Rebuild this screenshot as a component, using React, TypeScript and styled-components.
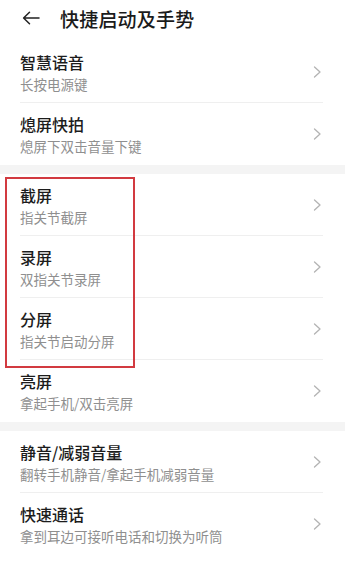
import React from "react";
import styled, { createGlobalStyle } from "styled-components";

const Global = createGlobalStyle`
  html, body { margin: 0; padding: 0; background: #ffffff; }
  body { font-family: "Noto Sans CJK SC", "Noto Sans", sans-serif; -webkit-font-smoothing: antialiased; }
`;

const Page = styled.div`
  width: 345px;
  min-height: 587px;
  background: #ffffff;
  display: flex;
  flex-direction: column;
`;

const Header = styled.div`
  height: 41px;
  display: flex;
  align-items: center;
  padding-left: 22px;
  box-sizing: border-box;
  padding-bottom: 9px;
`;

const BackBtn = styled.div`
  width: 18px;
  height: 14px;
  display: flex;
  align-items: center;
  margin-right: 20px;
  margin-top: 4px;
`;

const Title = styled.div`
  font-size: 19px;
  font-weight: 500;
  color: #1b1b1b;
  line-height: 24px;
  margin-top: 5px;
  letter-spacing: 0.2px;
`;

const Group = styled.div`
  position: relative;
  display: flex;
  flex-direction: column;
`;

const Band = styled.div`
  height: 9px;
  background: #f4f4f4;
`;

const Row = styled.div`
  height: 62px;
  box-sizing: border-box;
  display: flex;
  align-items: stretch;
  padding-left: 20px;
  padding-right: 22px;
`;

const RowInner = styled.div<{ $divider: boolean }>`
  flex: 1;
  display: flex;
  align-items: center;
  justify-content: space-between;
  border-bottom: ${(p) => (p.$divider ? "1px solid #efefef" : "1px solid transparent")};
`;

const Texts = styled.div`
  display: flex;
  flex-direction: column;
  padding-top: 1px;
`;

const ItemTitle = styled.div`
  font-size: 16px;
  line-height: 20px;
  font-weight: 500;
  color: #1c1c1c;
`;

const ItemSub = styled.div`
  font-size: 13.5px;
  line-height: 18px;
  color: #8f8f8f;
  margin-top: 3px;
`;

const Chevron = styled.svg`
  width: 9px;
  height: 12px;
  flex: none;
  margin-right: 1px;
`;

const Highlight = styled.div`
  position: absolute;
  left: 5px;
  top: 3px;
  width: 130px;
  height: 191px;
  border: 2.5px solid #d23a40;
  box-sizing: border-box;
  pointer-events: none;
`;

type Item = { t: string; s: string };

const groups: Item[][] = [
  [
    { t: "智慧语音", s: "长按电源键" },
    { t: "熄屏快拍", s: "熄屏下双击音量下键" },
  ],
  [
    { t: "截屏", s: "指关节截屏" },
    { t: "录屏", s: "双指关节录屏" },
    { t: "分屏", s: "指关节启动分屏" },
    { t: "亮屏", s: "拿起手机/双击亮屏" },
  ],
  [
    { t: "静音/减弱音量", s: "翻转手机静音/拿起手机减弱音量" },
    { t: "快速通话", s: "拿到耳边可接听电话和切换为听筒" },
  ],
];

const ChevronIcon = () => (
  <Chevron viewBox="0 0 9 12">
    <path d="M1.5 1 L7 6 L1.5 11" fill="none" stroke="#b3b3b3" strokeWidth="1.3" strokeLinecap="round" strokeLinejoin="round" />
  </Chevron>
);

export default function App() {
  return (
    <Page>
      <Global />
      <Header>
        <BackBtn>
          <svg width="18" height="14" viewBox="0 0 18 14">
            <path d="M17 7 H2 M7.5 1.2 L1.6 7 L7.5 12.8" fill="none" stroke="#222" strokeWidth="1.5" strokeLinecap="round" strokeLinejoin="round" />
          </svg>
        </BackBtn>
        <Title>快捷启动及手势</Title>
      </Header>
      {groups.map((g, gi) => (
        <React.Fragment key={gi}>
          {gi > 0 && <Band />}
          <Group>
            {g.map((it, i) => (
              <Row key={it.t}>
                <RowInner $divider={i < g.length - 1}>
                  <Texts>
                    <ItemTitle>{it.t}</ItemTitle>
                    <ItemSub>{it.s}</ItemSub>
                  </Texts>
                  <ChevronIcon />
                </RowInner>
              </Row>
            ))}
            {gi === 1 && <Highlight />}
          </Group>
        </React.Fragment>
      ))}
    </Page>
  );
}
